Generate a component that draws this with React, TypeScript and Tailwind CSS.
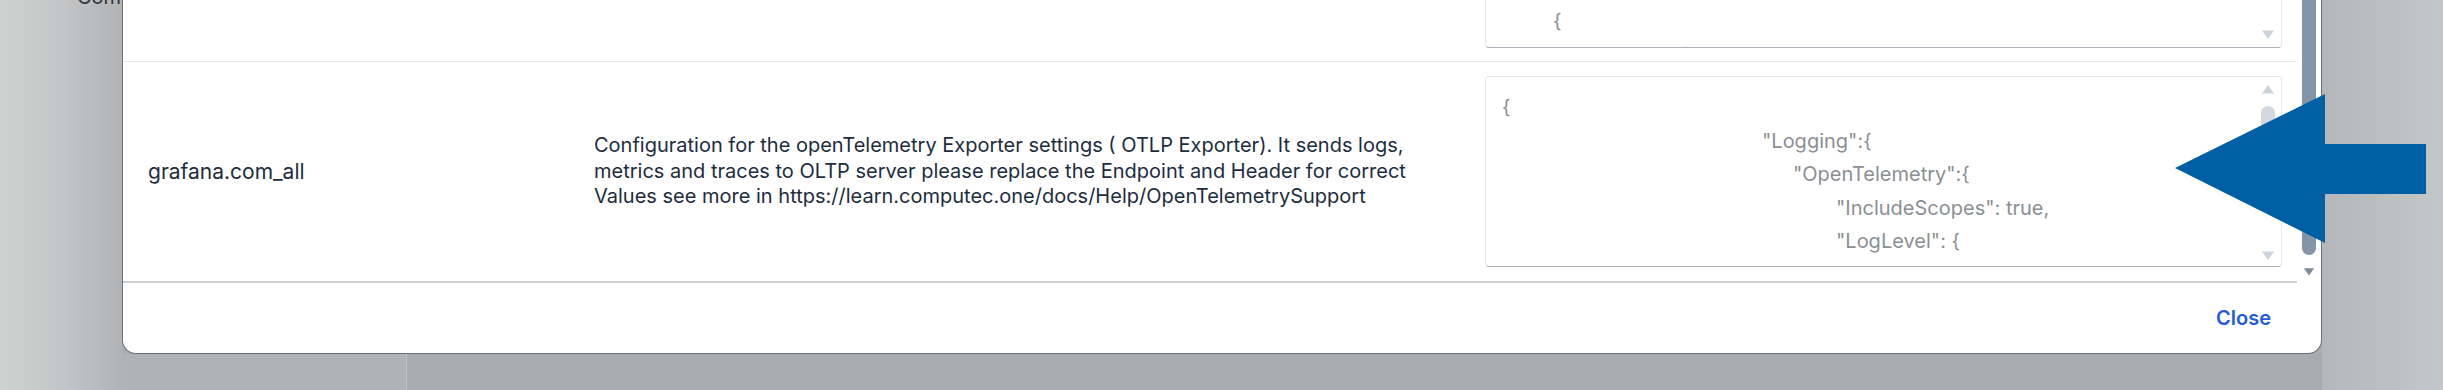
function Caret({ up = false, className = '' }: { up?: boolean; className?: string }) {
  return (
    <svg viewBox="0 0 14 10" className={className} aria-hidden>
      <path d={up ? 'M1 9.5 L7 1 L13 9.5 Z' : 'M1 0.5 L13 0.5 L7 9 Z'} fill="currentColor" strokeLinejoin="round" />
    </svg>
  );
}

function BigArrow() {
  return (
    <svg viewBox="0 0 251 149" className="absolute left-[2175px] top-[94px] h-[149px] w-[251px]" aria-hidden>
      <polygon points="0,74 150,0 150,50 251,50 251,100 150,100 150,149" fill="#0160a4" />
    </svg>
  );
}

const jsonLines = [
  { pad: 'pl-[16px]', text: '{' },
  { pad: 'pl-[276px]', text: '"Logging":{' },
  { pad: 'pl-[307px]', text: '"OpenTelemetry":{' },
  { pad: 'pl-[350px]', text: '"IncludeScopes": true,' },
  { pad: 'pl-[350px]', text: '"LogLevel": {' },
  { pad: 'pl-[380px]', text: '"Default":"Trace",' },
];

export default function App() {
  return (
    <div className="relative flex h-[390px] w-full overflow-hidden bg-[#aaacaf] font-['Inter',sans-serif]">
      {/* page behind the dialog */}
      <div className="w-[122px] shrink-0 overflow-hidden bg-linear-to-r from-[#cfd0d0] via-[#c4c5c6] to-[#b1b3b6]">
        <p className="-mt-[15px] ml-[77px] whitespace-nowrap text-[20px] leading-[24px] text-[#32363a]">Components</p>
      </div>

      <div className="flex w-[2200px] shrink-0 flex-col">
        <div className="flex h-[354px] flex-col overflow-hidden rounded-b-[14px] border-x border-b border-[#6b7077] bg-white">
          <div className="flex h-[283px]">
            <div className="flex flex-1 flex-col">
              {/* previous row, scrolled mostly out of view */}
              <div className="grid h-[62px] grid-cols-[471px_891px_797px] border-b border-[#e5e7e9]">
                <div />
                <div />
                <div className="flex h-[48px] overflow-hidden rounded-b-[4px] border-x border-b border-[#e6e8ea] border-b-[#a9b0b8]">
                  <div className="flex-1 overflow-hidden pt-[5px] text-[20px] leading-[33.5px] text-[#8b8f94] whitespace-pre">
                    <div className="pl-[67px]">{'{'}</div>
                    <div className="pl-[92px]">"Logging":{'{'}</div>
                  </div>
                  <div className="flex w-[24px] flex-col items-center pt-[30px] pr-[2px]">
                    <Caret className="h-[10px] w-[14px] text-[#cdd3da]" />
                  </div>
                </div>
              </div>

              <div className="grid h-[219px] grid-cols-[471px_891px_797px] items-center text-[#1d2d3e]">
                <div className="pl-[25px] text-[21px] leading-[25.5px]">grafana.com_all</div>
                <div className="text-[20px] leading-[25.5px] whitespace-nowrap">
                  Configuration for the openTelemetry Exporter settings ( OTLP Exporter). It sends logs,
                  <br />
                  metrics and traces to OLTP server please replace the Endpoint and Header for correct
                  <br />
                  Values see more in https://learn.computec.one/docs/Help/OpenTelemetrySupport
                </div>
                <div className="flex h-[191px] overflow-hidden rounded-[4px] border border-[#e6e8ea] border-b-[#a9b0b8]">
                  <div className="flex-1 overflow-hidden pt-[14px] text-[20px] leading-[33.5px] text-[#8b8f94] whitespace-pre">
                    {jsonLines.map((l, i) => (
                      <div key={i} className={l.pad}>
                        {l.text}
                      </div>
                    ))}
                  </div>
                  <div className="flex w-[24px] flex-col items-center pt-[7px] pb-[5px] pr-[2px]">
                    <Caret up className="h-[10px] w-[14px] text-[#cdd3da]" />
                    <div className="mt-[12px] h-[80px] w-[14px] rounded-full bg-[#d3d8de]" />
                    <Caret className="mt-auto h-[10px] w-[14px] text-[#cdd3da]" />
                  </div>
                </div>
              </div>
              <div className="h-[2px] bg-[#cdd1d5]" />
            </div>

            {/* dialog scrollbar */}
            <div className="flex w-[24px] flex-col items-start pl-[5px]">
              <div className="h-[255px] w-[14px] rounded-b-full bg-[#8494a9]" />
              <Caret className="ml-px mt-[12px] h-[10px] w-[12px] text-[#7d8a9e]" />
            </div>
          </div>

          <div className="flex flex-1 items-center justify-end pr-[50px]">
            <button className="text-[20px] font-semibold leading-[24px] text-[#245bd9]">Close</button>
          </div>
        </div>

        <div className="flex flex-1">
          <div className="w-[285px] border-r border-[#c0c2c5] bg-[#b0b2b5]" />
          <div className="flex-1 bg-[#a9abae]" />
        </div>
      </div>

      <div className="flex-1 bg-linear-to-r from-[#b4b6b9] to-[#c5c6c8]" />

      <BigArrow />
    </div>
  );
}
